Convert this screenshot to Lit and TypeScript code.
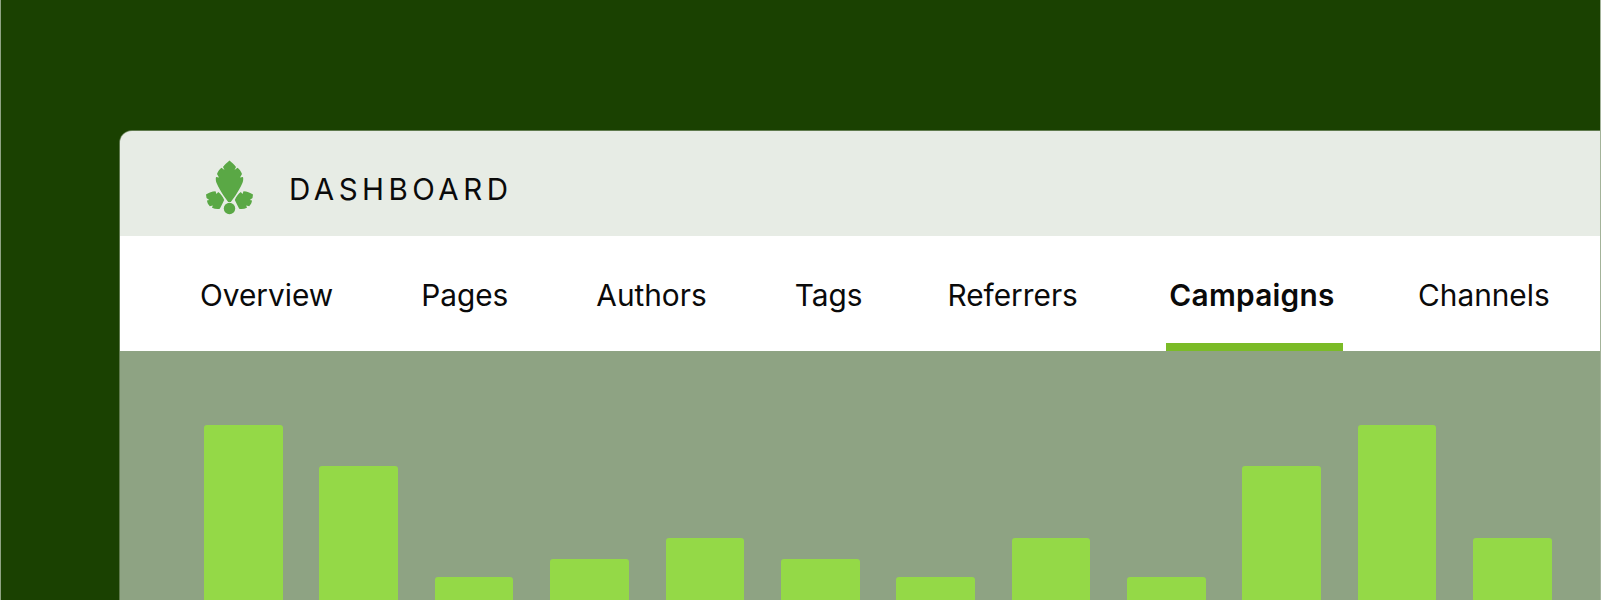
import { LitElement, html, css } from "lit";
import { customElement } from "lit/decorators.js";

const TABS = [
  { label: "Overview", cls: "" },
  { label: "Pages", cls: "" },
  { label: "Authors", cls: "" },
  { label: "Tags", cls: "" },
  { label: "Referrers", cls: "referrers" },
  { label: "Campaigns", cls: "on" },
  { label: "Channels", cls: "channels" },
];
const BARS = [175, 134, 23, 41.5, 62, 41.5, 23, 62, 23, 134, 175, 62];

@customElement("app-root")
export class AppRoot extends LitElement {
  static styles = css`
    :host { display: block; width: 1601px; height: 600px; overflow: hidden; background: #1a4101; font-family: Inter, sans-serif; }
    .stage { height: 600px; padding: 131px 0 0 119px; box-sizing: border-box; border-left: 1px solid #8fa383; border-right: 1px solid rgba(255,255,255,.6); }
    .card { height: 469px; border-radius: 12px 0 0 0; overflow: hidden; background: #8ea383; display: flex; flex-direction: column; box-shadow: -1px 0 0 rgba(255,255,255,.3), 0 -1px 0 rgba(255,255,255,.3); }
    .head { height: 105px; flex: none; background: #e7ece5; display: flex; align-items: center; padding: 12px 0 0 85px; gap: 35px; box-sizing: border-box; }
    .logo { width: 49px; height: 55px; display: block; flex: none; margin-top: -4px; }
    .title { font-size: 29.5px; letter-spacing: 4.5px; color: #0a0a0a; line-height: 1; }
    .tabs { height: 115px; flex: none; background: #fff; display: flex; gap: 77px; padding-left: 74.5px; box-sizing: border-box; }
    .tab { height: 115px; box-sizing: border-box; padding: 0 5.5px; font-size: 29.8px; line-height: 119px; color: #0a0a0a; position: relative; white-space: nowrap; }
    .tab.referrers { margin-left: -3px; }
    .tab.on { font-weight: 600; letter-spacing: .25px; margin-left: 6px; padding: 0 8.5px 0 3px; }
    .tab.on::after { content: ""; position: absolute; left: 0; right: 0; bottom: 0; height: 8px; background: #7bbb27; }
    .tab.channels { margin-left: -7.5px; }
    .chart { flex: 1; display: flex; align-items: flex-end; gap: 36.7px; padding-left: 84px; }
    .bar { width: 78.7px; background: #94d947; border-radius: 3px 3px 0 0; flex: none; }
  `;
  render() {
    return html`<div class="stage"><div class="card">
      <div class="head">
        <svg class="logo" viewBox="0 0 49 55" aria-hidden="true">
          <g fill="#5aa845">
            <path d="M24.5 0.5 C26.5 2.500 29.500 4.500 31 7 L29.500 10 L32.500 7.800 C34.500 9.500 36.200 11.500 37 14 L35 17.500 L38 17 C38.500 19 38.200 21.500 37.200 23.500 C35.500 27.500 33 31.500 30.500 35.500 L25.800 42 L23.200 42 L18.500 35.500 C16 31.500 13.500 27.500 11.800 23.500 C10.800 21.500 10.500 19 11 17 L14 17.500 L12 14 C12.800 11.500 14.500 9.500 16.500 7.800 L19.500 10 L18 7 C19.500 4.500 22.500 2.500 24.500 0.5 Z"/>
            <circle cx="24.5" cy="48.5" r="5.7"/>
            <path d="M1 34.500 C4 32.500 7 31.200 10.500 31.200 L11.500 34 L13.200 32 C15.800 34 17.800 36.500 19.200 40 C17.800 43 16.200 46 14.800 48.800 C12 49.300 9.500 48.800 7 47.800 L7.800 45.500 L4.800 46.200 C3 44.500 2.200 42.500 2 40.500 L4.200 40 L1.500 38 Z"/>
            <path d="M48 34.500 C45 32.500 42 31.200 38.500 31.200 L37.500 34 L35.800 32 C33.200 34 31.200 36.500 29.800 40 C31.200 43 32.800 46 34.200 48.800 C37 49.300 39.500 48.800 42 47.800 L41.200 45.500 L44.200 46.200 C46 44.500 46.800 42.500 47 40.500 L44.800 40 L47.500 38 Z"/>
          </g>
        </svg>
        <span class="title">DASHBOARD</span>
      </div>
      <div class="tabs">
        ${TABS.map((t) => html`<div class="tab ${t.cls}">${t.label}</div>`)}
      </div>
      <div class="chart">
        ${BARS.map((h) => html`<div class="bar" style="height:${h}px"></div>`)}
      </div>
    </div></div>`;
  }
}
